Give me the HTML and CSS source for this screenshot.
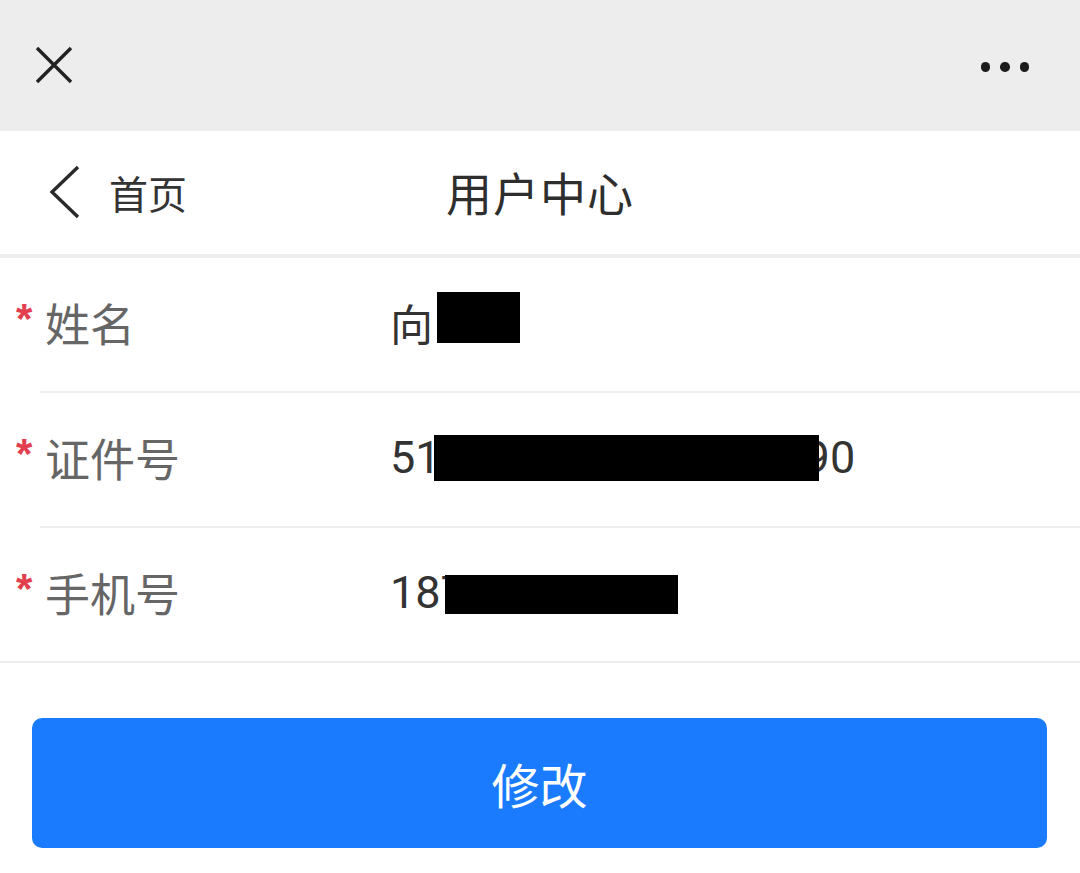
FILE: index.html
```html
<!DOCTYPE html>
<html lang="zh-CN">
<head>
<meta charset="utf-8">
<title>用户中心</title>
<link rel="stylesheet" href="styles.css">
</head>
<body>
<div class="topbar">
  <svg class="close" width="38" height="38" viewBox="0 0 38 38"><path d="M2 2 L36 36 M36 2 L2 36" stroke="#222" stroke-width="3.4" fill="none"/></svg>
  <div class="dots"><span></span><span></span><span></span></div>
</div>
<div class="header">
  <div class="back">
    <svg width="34" height="54" viewBox="0 0 34 54"><path d="M30 2 L4 27 L30 52" stroke="#2a2a2a" stroke-width="3.4" fill="none"/></svg>
    <span class="back-text">首页</span>
  </div>
  <div class="title">用户中心</div>
  <div></div>
</div>
<div class="form">
  <div class="row">
    <div class="label"><span class="req">*</span>姓名</div>
    <div class="value">向<span class="mask mask-name"></span></div>
  </div>
  <div class="row">
    <div class="label"><span class="req">*</span>证件号</div>
    <div class="value num">51<span class="mask mask-id"></span>90</div>
  </div>
  <div class="row last">
    <div class="label"><span class="req">*</span>手机号</div>
    <div class="value num">187<span class="mask mask-phone"></span></div>
  </div>
</div>
<div class="actions">
  <button class="btn">修改</button>
</div>
</body>
</html>
```
FILE: styles.css
```css
* { box-sizing: border-box; }
html, body { margin: 0; padding: 0; background: #fff; }
body {
  font-family: "Noto Sans CJK SC", "Noto Sans", Roboto, sans-serif;
  color: #333;
}
.topbar {
  height: 131px;
  background: #ededed;
  display: flex;
  align-items: center;
  justify-content: space-between;
  padding: 0 51px 0 35px;
}
.close { display: block; margin-top: -1px; }
.dots { display: flex; gap: 10px; margin-top: 3px; }
.dots span {
  width: 9.5px; height: 9.5px; border-radius: 50%;
  background: #1c1c1c; display: block;
}
.header {
  height: 127px;
  border-bottom: 4px solid #efefef;
  display: grid;
  grid-template-columns: 1fr auto 1fr;
  align-items: center;
}
.back { display: flex; align-items: center; padding-left: 48px; }
.back svg { display: block; margin-top: -2px; }
.back-text {
  font-size: 39px; color: #333; margin-left: 27px; line-height: 1;
}
.title { font-size: 46px; color: #2e2e2e; letter-spacing: 1px; line-height: 1; margin-top: -4px; }
.row {
  position: relative;
  height: 135px;
  display: flex;
  align-items: center;
  padding-left: 16px;
  padding-bottom: 6px;
}
.row::after {
  content: "";
  position: absolute;
  left: 40px; right: 0; bottom: 0;
  height: 2px;
  background: #eeeeee;
}
.row.last::after { left: 0; }
.label {
  width: 374px;
  font-size: 45px;
  color: #666;
  display: flex;
  align-items: center;
  line-height: 1;
}
.req {
  color: #e2404f;
  font-family: "Liberation Sans", sans-serif;
  font-weight: bold;
  font-size: 42px;
  width: 29px;
  margin-top: -8px;
}
.value {
  font-size: 43px;
  color: #333;
  line-height: 1;
  display: flex;
  align-items: center;
}
.value.num { font-family: Roboto, "Noto Sans CJK SC", sans-serif; font-size: 45px; }
.mask { display: inline-block; background: #000; position: relative; }
.mask-name { width: 83px; height: 51px; margin-left: 4px; margin-top: -10px; }
.mask-id { width: 385px; height: 46px; margin-left: -7px; margin-right: -14px; margin-top: 0; }
.mask-phone { width: 233px; height: 39px; margin-left: -21px; margin-top: 4px; }
.actions { padding: 55px 33px 0 32px; }
.btn {
  width: 100%;
  height: 130px;
  border: 0;
  border-radius: 10px;
  background: #1a7bff;
  color: #fff;
  font-family: "Noto Sans CJK SC", sans-serif;
  font-size: 48px;
  display: block;
}
```
